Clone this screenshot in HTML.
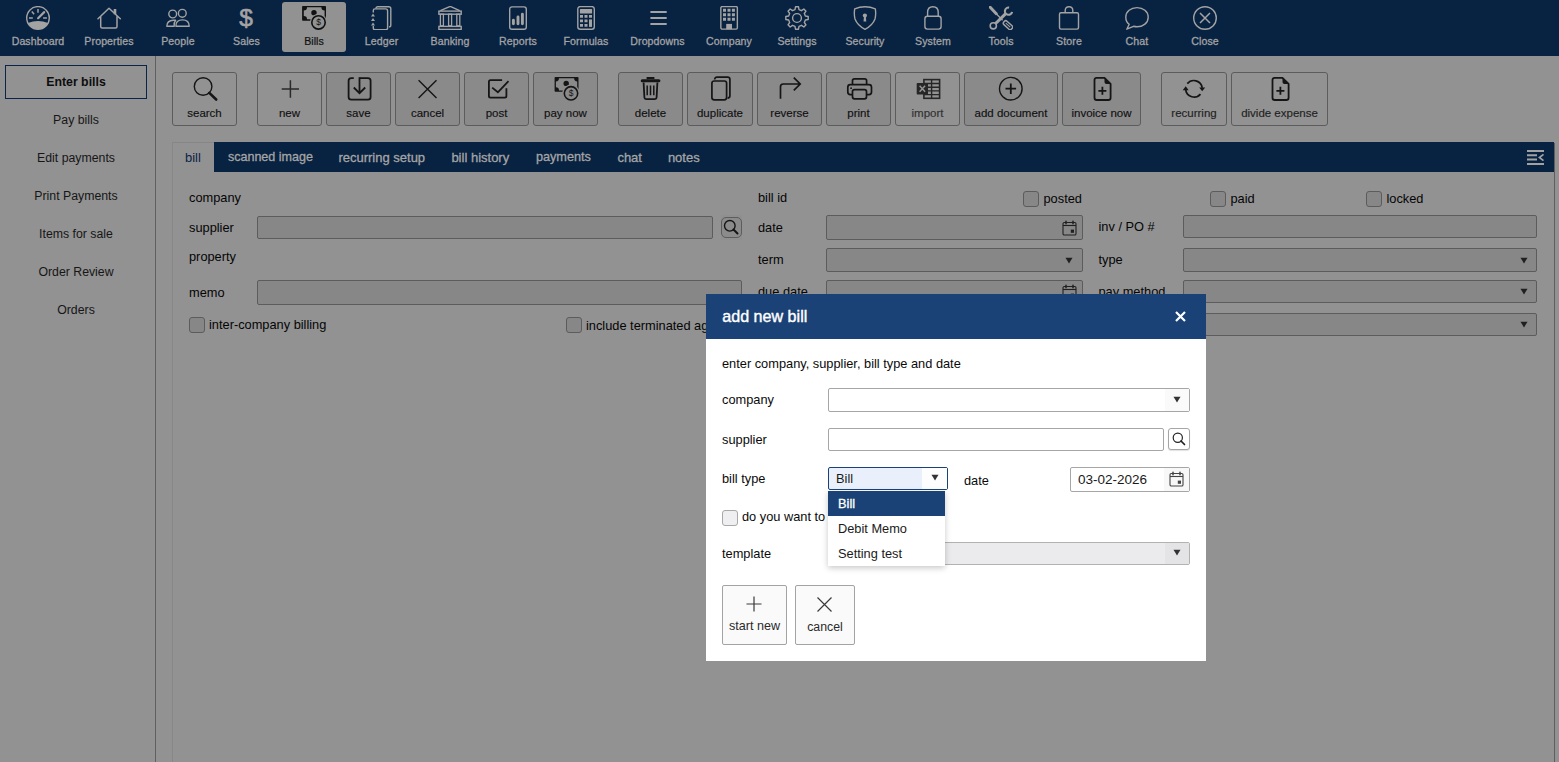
<!DOCTYPE html>
<html><head><meta charset="utf-8"><title>add new bill</title>
<style>
html,body{margin:0;padding:0;}
body{width:1559px;height:762px;overflow:hidden;position:relative;background:#929292;font-family:"Liberation Sans", sans-serif;}
</style></head><body>
<div style="position:absolute;left:0px;top:0px;width:1559px;height:56px;box-sizing:border-box;background:#082242;border-radius:0px;"></div>
<svg style="position:absolute;left:26px;top:6px;" width="24" height="24" viewBox="0 0 24 24"><circle cx="12" cy="11.9" r="11.3" fill="none" stroke="#a3a3a3" stroke-width="1.4"/><path d="M1.9 17 Q12 12.8 22.1 17 A11.3 11.3 0 0 1 1.9 17Z" fill="#a3a3a3"/><path d="M12.1 12.2 L18.2 6.1" stroke="#a3a3a3" stroke-width="2.2" stroke-linecap="round"/><path d="M12 3.1v3.6M5.8 5.5l2.3 2.7M3 12h3.8M17.1 12h3.8" stroke="#a3a3a3" stroke-width="1.5"/></svg>
<div style="position:absolute;left:-162px;width:400px;top:36.03px;font-size:10.6px;line-height:10.6px;color:#a3a3a3;font-weight:normal;text-align:center;white-space:nowrap;-webkit-text-stroke:0.3px #a3a3a3;letter-spacing:0.1px;">Dashboard</div>
<svg style="position:absolute;left:97px;top:6px;" width="24" height="24" viewBox="0 0 24 24"><path d="M1 12.7 L12 2.3 L23.3 12.7 M3.7 10.5 V20.5 Q3.7 22 5.2 22 H18.5 Q20 22 20 20.5 V10.5" fill="none" stroke="#a3a3a3" stroke-width="1.5" stroke-linejoin="round" stroke-linecap="round"/><rect x="16.7" y="3" width="2.6" height="5.3" fill="#a3a3a3"/></svg>
<div style="position:absolute;left:-91px;width:400px;top:36.03px;font-size:10.6px;line-height:10.6px;color:#a3a3a3;font-weight:normal;text-align:center;white-space:nowrap;-webkit-text-stroke:0.3px #a3a3a3;letter-spacing:0.1px;">Properties</div>
<svg style="position:absolute;left:166px;top:6px;" width="24" height="24" viewBox="0 0 24 24"><circle cx="6.7" cy="8" r="3.9" fill="none" stroke="#a3a3a3" stroke-width="1.4"/><circle cx="16.3" cy="7.3" r="3.9" fill="none" stroke="#a3a3a3" stroke-width="1.4"/><path d="M9.9 20.2 Q9.6 13.9 16.5 13.9 Q23.2 13.9 23.2 20.2 Z" fill="none" stroke="#a3a3a3" stroke-width="1.4" stroke-linejoin="round"/><path d="M8.2 20.2 H0.8 Q1 14.6 7.2 14.3 H9.6 Q7.8 16.4 8.2 20.2Z" fill="none" stroke="#a3a3a3" stroke-width="1.4" stroke-linejoin="round"/></svg>
<div style="position:absolute;left:-22px;width:400px;top:36.03px;font-size:10.6px;line-height:10.6px;color:#a3a3a3;font-weight:normal;text-align:center;white-space:nowrap;-webkit-text-stroke:0.3px #a3a3a3;letter-spacing:0.1px;">People</div>
<div style="position:absolute;left:46.0px;width:400px;top:6.46px;font-size:24.5px;line-height:24.5px;color:#a3a3a3;font-weight:normal;text-align:center;white-space:nowrap;-webkit-text-stroke:0.6px #a3a3a3;">$</div>
<div style="position:absolute;left:46.5px;width:400px;top:36.03px;font-size:10.6px;line-height:10.6px;color:#a3a3a3;font-weight:normal;text-align:center;white-space:nowrap;-webkit-text-stroke:0.3px #a3a3a3;letter-spacing:0.1px;">Sales</div>
<div style="position:absolute;left:282px;top:2px;width:64px;height:50px;box-sizing:border-box;background:#929292;border-radius:3px;"></div>
<svg style="position:absolute;left:302px;top:6px;" width="24" height="24" viewBox="0 0 24 24"><rect x="0.1" y="0" width="23.9" height="14.7" rx="0.8" fill="#111"/><path d="M5.00 1.3 H19.40 A3.2 3.2 0 0 0 22.6 4.50 V10.00 A3.2 3.2 0 0 0 19.40 13.2 H5.00 A3.2 3.2 0 0 0 1.8 10.00 V4.50 A3.2 3.2 0 0 0 5.00 1.3Z" fill="#929292"/><circle cx="12" cy="6.7" r="2.7" fill="#111"/><circle cx="16.5" cy="16.4" r="8.6" fill="#929292"/><circle cx="16.5" cy="16.4" r="6.7" fill="#929292" stroke="#111" stroke-width="1.6"/><text x="16.5" y="19.4" font-size="8.5" text-anchor="middle" fill="#111" font-family="Liberation Sans">$</text></svg>
<div style="position:absolute;left:114px;width:400px;top:36.03px;font-size:10.6px;line-height:10.6px;color:#111;font-weight:normal;text-align:center;white-space:nowrap;-webkit-text-stroke:0.2px #111;">Bills</div>
<svg style="position:absolute;left:369.5px;top:6px;" width="24" height="24" viewBox="0 0 24 24"><path d="M6 2.5 Q6 0.8 7.8 0.8 H18.8 Q20.8 0.8 20.8 2.8 V19 Q20.8 20.9 19 20.9" fill="none" stroke="#a3a3a3" stroke-width="1.4"/><path d="M3.3 6.5 V4.6 Q3.3 2.9 5 2.9 H15.6 Q17.6 2.9 17.6 4.9 V21.9 Q17.6 23.7 15.8 23.7 H5 Q3.3 23.7 3.3 22 V20" fill="none" stroke="#a3a3a3" stroke-width="1.4"/><path d="M1 10.6 L3 7.6 L5 10.6Z M1 15 L3 12 L5 15Z M1 19.5 L3 16.5 L5 19.5Z" fill="#a3a3a3"/></svg>
<div style="position:absolute;left:181.5px;width:400px;top:36.03px;font-size:10.6px;line-height:10.6px;color:#a3a3a3;font-weight:normal;text-align:center;white-space:nowrap;-webkit-text-stroke:0.3px #a3a3a3;letter-spacing:0.1px;">Ledger</div>
<svg style="position:absolute;left:438px;top:6px;" width="24" height="24" viewBox="0 0 24 24"><path d="M2.4 4.7 L12.2 0.4 L21.7 4.7" fill="none" stroke="#a3a3a3" stroke-width="1.4" stroke-linejoin="round"/><rect x="0.9" y="5.1" width="22.3" height="3.1" fill="none" stroke="#a3a3a3" stroke-width="1.4"/><rect x="2.4" y="8.2" width="3" height="11.6" fill="none" stroke="#a3a3a3" stroke-width="1.3"/><rect x="10.6" y="8.2" width="3" height="11.6" fill="none" stroke="#a3a3a3" stroke-width="1.3"/><rect x="18.8" y="8.2" width="3" height="11.6" fill="none" stroke="#a3a3a3" stroke-width="1.3"/><rect x="0.9" y="20.4" width="22.3" height="3" fill="none" stroke="#a3a3a3" stroke-width="1.4"/></svg>
<div style="position:absolute;left:250px;width:400px;top:36.03px;font-size:10.6px;line-height:10.6px;color:#a3a3a3;font-weight:normal;text-align:center;white-space:nowrap;-webkit-text-stroke:0.3px #a3a3a3;letter-spacing:0.1px;">Banking</div>
<svg style="position:absolute;left:506px;top:6px;" width="24" height="24" viewBox="0 0 24 24"><rect x="3.7" y="0.9" width="16.6" height="22.3" rx="2.3" fill="none" stroke="#a3a3a3" stroke-width="1.4"/><path d="M7.4 17.8v-3.6M12 17.8v-6.8M16.4 17.8V8.3" stroke="#a3a3a3" stroke-width="2.9" stroke-linecap="round"/></svg>
<div style="position:absolute;left:318px;width:400px;top:36.03px;font-size:10.6px;line-height:10.6px;color:#a3a3a3;font-weight:normal;text-align:center;white-space:nowrap;-webkit-text-stroke:0.3px #a3a3a3;letter-spacing:0.1px;">Reports</div>
<svg style="position:absolute;left:574px;top:6px;" width="24" height="24" viewBox="0 0 24 24"><rect x="3.8" y="0.6" width="16.5" height="22.6" rx="2.5" fill="none" stroke="#a3a3a3" stroke-width="1.4"/><rect x="5.9" y="3.1" width="12.2" height="4.4" rx="0.6" fill="#a3a3a3"/><path d="M6 10.4h3M10.5 10.4h3M15 10.4h3M6 14.9h3M10.5 14.9h3M6 19.4h3M10.5 19.4h3" stroke="#a3a3a3" stroke-width="2.8"/><rect x="15" y="13.4" width="3" height="7.5" fill="#a3a3a3"/></svg>
<div style="position:absolute;left:386px;width:400px;top:36.03px;font-size:10.6px;line-height:10.6px;color:#a3a3a3;font-weight:normal;text-align:center;white-space:nowrap;-webkit-text-stroke:0.3px #a3a3a3;letter-spacing:0.1px;">Formulas</div>
<svg style="position:absolute;left:645.5px;top:6px;" width="24" height="24" viewBox="0 0 24 24"><path d="M4.4 5.9h16.3M4.4 11.9h16.3M4.4 17.9h16.3" stroke="#a3a3a3" stroke-width="2"/></svg>
<div style="position:absolute;left:457.5px;width:400px;top:36.03px;font-size:10.6px;line-height:10.6px;color:#a3a3a3;font-weight:normal;text-align:center;white-space:nowrap;-webkit-text-stroke:0.3px #a3a3a3;letter-spacing:0.1px;">Dropdowns</div>
<svg style="position:absolute;left:717px;top:6px;" width="24" height="24" viewBox="0 0 24 24"><rect x="3.85" y="0.55" width="16.5" height="22.6" rx="1.3" fill="none" stroke="#a3a3a3" stroke-width="1.4"/><path d="M6 4.3h3M10.5 4.3h3M14.9 4.3h3M6 8.8h3M10.5 8.8h3M14.9 8.8h3M6 13.3h3M10.5 13.3h3M14.9 13.3h3" stroke="#a3a3a3" stroke-width="2.9"/><rect x="9.2" y="17.9" width="5.8" height="5.3" fill="#a3a3a3"/></svg>
<div style="position:absolute;left:529px;width:400px;top:36.03px;font-size:10.6px;line-height:10.6px;color:#a3a3a3;font-weight:normal;text-align:center;white-space:nowrap;-webkit-text-stroke:0.3px #a3a3a3;letter-spacing:0.1px;">Company</div>
<svg style="position:absolute;left:785px;top:6px;" width="24" height="24" viewBox="0 0 24 24"><path d="M20.36 9.99 L23.20 10.50 L23.20 13.50 L20.36 14.01 L19.33 16.49 L20.98 18.86 L18.86 20.98 L16.49 19.33 L14.01 20.36 L13.50 23.20 L10.50 23.20 L9.99 20.36 L7.51 19.33 L5.14 20.98 L3.02 18.86 L4.67 16.49 L3.64 14.01 L0.80 13.50 L0.80 10.50 L3.64 9.99 L4.67 7.51 L3.02 5.14 L5.14 3.02 L7.51 4.67 L9.99 3.64 L10.50 0.80 L13.50 0.80 L14.01 3.64 L16.49 4.67 L18.86 3.02 L20.98 5.14 L19.33 7.51 Z" fill="none" stroke="#a3a3a3" stroke-width="1.4" stroke-linejoin="round"/><circle cx="12" cy="12" r="4.4" fill="none" stroke="#a3a3a3" stroke-width="1.4"/></svg>
<div style="position:absolute;left:597px;width:400px;top:36.03px;font-size:10.6px;line-height:10.6px;color:#a3a3a3;font-weight:normal;text-align:center;white-space:nowrap;-webkit-text-stroke:0.3px #a3a3a3;letter-spacing:0.1px;">Settings</div>
<svg style="position:absolute;left:853px;top:6px;" width="24" height="24" viewBox="0 0 24 24"><path d="M12 0.8 Q17.5 0.8 22.3 2.8 Q23.2 8 22 13 Q19.5 19.5 12 23.3 Q4.5 19.5 2 13 Q0.8 8 1.7 2.8 Q6.5 0.8 12 0.8Z" fill="none" stroke="#a3a3a3" stroke-width="1.4" stroke-linejoin="round"/><circle cx="11.9" cy="9.6" r="2.1" fill="#a3a3a3"/><path d="M11 10.5 L10.5 15.6 H13.3 L12.8 10.5Z" fill="#a3a3a3"/></svg>
<div style="position:absolute;left:665px;width:400px;top:36.03px;font-size:10.6px;line-height:10.6px;color:#a3a3a3;font-weight:normal;text-align:center;white-space:nowrap;-webkit-text-stroke:0.3px #a3a3a3;letter-spacing:0.1px;">Security</div>
<svg style="position:absolute;left:921px;top:6px;" width="24" height="24" viewBox="0 0 24 24"><path d="M6.6 10.3 V6.5 Q6.6 0.8 11.9 0.8 Q17.2 0.8 17.2 6.5 V10.3" fill="none" stroke="#a3a3a3" stroke-width="1.4"/><rect x="3.9" y="10.3" width="16.2" height="12.8" rx="2.5" fill="none" stroke="#a3a3a3" stroke-width="1.4"/></svg>
<div style="position:absolute;left:733px;width:400px;top:36.03px;font-size:10.6px;line-height:10.6px;color:#a3a3a3;font-weight:normal;text-align:center;white-space:nowrap;-webkit-text-stroke:0.3px #a3a3a3;letter-spacing:0.1px;">System</div>
<svg style="position:absolute;left:989px;top:6px;" width="24" height="24" viewBox="0 0 24 24"><path d="M1.2 1.2 L7.3 7.8" stroke="#a3a3a3" stroke-width="2.9" stroke-linecap="round"/><path d="M7.3 7.8 L13.6 14.3" stroke="#a3a3a3" stroke-width="1.3"/><g transform="rotate(42 19 19.2)"><rect x="13.8" y="16.9" width="10.4" height="4.6" rx="1.8" fill="none" stroke="#a3a3a3" stroke-width="1.5"/><path d="M16 19.2 H22" stroke="#a3a3a3" stroke-width="1"/></g><circle cx="4.3" cy="19.8" r="3.1" fill="none" stroke="#a3a3a3" stroke-width="1.6"/><path d="M6.6 17.5 L17 7.4" stroke="#a3a3a3" stroke-width="3.1"/><path d="M23.05 5.83 A3.6 3.6 0 1 1 20.13 1.65" fill="none" stroke="#a3a3a3" stroke-width="2.1"/></svg>
<div style="position:absolute;left:801px;width:400px;top:36.03px;font-size:10.6px;line-height:10.6px;color:#a3a3a3;font-weight:normal;text-align:center;white-space:nowrap;-webkit-text-stroke:0.3px #a3a3a3;letter-spacing:0.1px;">Tools</div>
<svg style="position:absolute;left:1057px;top:6px;" width="24" height="24" viewBox="0 0 24 24"><rect x="2.5" y="6.8" width="19" height="16.3" rx="1.5" fill="none" stroke="#a3a3a3" stroke-width="1.4"/><path d="M8.2 6.8 V4.6 Q8.2 0.8 12 0.8 Q15.8 0.8 15.8 4.6 V6.8" fill="none" stroke="#a3a3a3" stroke-width="1.4"/></svg>
<div style="position:absolute;left:869px;width:400px;top:36.03px;font-size:10.6px;line-height:10.6px;color:#a3a3a3;font-weight:normal;text-align:center;white-space:nowrap;-webkit-text-stroke:0.3px #a3a3a3;letter-spacing:0.1px;">Store</div>
<svg style="position:absolute;left:1125px;top:6px;" width="24" height="24" viewBox="0 0 24 24"><path d="M4.2 18.3 C1.8 16.5 0.8 14 0.8 11.2 C0.8 5.5 5.8 1.6 12 1.6 C18.2 1.6 23.2 5.5 23.2 11.2 C23.2 16.9 18.2 20.8 12 20.8 C10.8 20.8 9.6 20.6 8.5 20.3 L1.8 23.2 Z" fill="none" stroke="#a3a3a3" stroke-width="1.4" stroke-linejoin="round"/></svg>
<div style="position:absolute;left:937px;width:400px;top:36.03px;font-size:10.6px;line-height:10.6px;color:#a3a3a3;font-weight:normal;text-align:center;white-space:nowrap;-webkit-text-stroke:0.3px #a3a3a3;letter-spacing:0.1px;">Chat</div>
<svg style="position:absolute;left:1193px;top:6px;" width="24" height="24" viewBox="0 0 24 24"><circle cx="12" cy="12" r="11.3" fill="none" stroke="#a3a3a3" stroke-width="1.4"/><path d="M7 7 L17 17 M17 7 L7 17" stroke="#a3a3a3" stroke-width="1.5"/></svg>
<div style="position:absolute;left:1005px;width:400px;top:36.03px;font-size:10.6px;line-height:10.6px;color:#a3a3a3;font-weight:normal;text-align:center;white-space:nowrap;-webkit-text-stroke:0.3px #a3a3a3;letter-spacing:0.1px;">Close</div>
<div style="position:absolute;left:155px;top:56px;width:1px;height:706px;box-sizing:border-box;background:#5f5f5f;border-radius:0px;"></div>
<div style="position:absolute;left:5px;top:65px;width:142px;height:34px;box-sizing:border-box;background:transparent;border:1px solid #0a2348;border-radius:0px;"></div>
<div style="position:absolute;left:-124px;width:400px;top:75.59px;font-size:12.3px;line-height:12.3px;color:#0d0d0d;font-weight:bold;text-align:center;white-space:nowrap;">Enter bills</div>
<div style="position:absolute;left:-124px;width:400px;top:113.59px;font-size:12.3px;line-height:12.3px;color:#161616;font-weight:normal;text-align:center;white-space:nowrap;">Pay bills</div>
<div style="position:absolute;left:-124px;width:400px;top:151.59px;font-size:12.3px;line-height:12.3px;color:#161616;font-weight:normal;text-align:center;white-space:nowrap;">Edit payments</div>
<div style="position:absolute;left:-124px;width:400px;top:189.59px;font-size:12.3px;line-height:12.3px;color:#161616;font-weight:normal;text-align:center;white-space:nowrap;">Print Payments</div>
<div style="position:absolute;left:-124px;width:400px;top:227.59px;font-size:12.3px;line-height:12.3px;color:#161616;font-weight:normal;text-align:center;white-space:nowrap;">Items for sale</div>
<div style="position:absolute;left:-124px;width:400px;top:265.59px;font-size:12.3px;line-height:12.3px;color:#161616;font-weight:normal;text-align:center;white-space:nowrap;">Order Review</div>
<div style="position:absolute;left:-124px;width:400px;top:303.59px;font-size:12.3px;line-height:12.3px;color:#161616;font-weight:normal;text-align:center;white-space:nowrap;">Orders</div>
<div style="position:absolute;left:172px;top:72px;width:65px;height:54px;box-sizing:border-box;background:#929292;border:1px solid #5c5c5c;border-radius:3px;"></div>
<svg style="position:absolute;left:190.5px;top:75px;" width="28" height="28" viewBox="0 0 28 28"><circle cx="12.1" cy="11.5" r="8.8" fill="none" stroke="#151515" stroke-width="1.4"/><path d="M18.3 17.9 L25.2 24.5" stroke="#151515" stroke-width="2.6" stroke-linecap="round"/></svg>
<div style="position:absolute;left:4.5px;width:400px;top:108.27px;font-size:11.5px;line-height:11.5px;color:#111111;font-weight:normal;text-align:center;white-space:nowrap;-webkit-text-stroke:0.15px #111111;">search</div>
<div style="position:absolute;left:257px;top:72px;width:65px;height:54px;box-sizing:border-box;background:#929292;border:1px solid #5c5c5c;border-radius:3px;"></div>
<svg style="position:absolute;left:275.5px;top:75px;" width="28" height="28" viewBox="0 0 28 28"><path d="M14.4 5.2v17.6M5.7 14h17.3" stroke="#2a2a2a" stroke-width="1.5"/></svg>
<div style="position:absolute;left:89.5px;width:400px;top:108.27px;font-size:11.5px;line-height:11.5px;color:#111111;font-weight:normal;text-align:center;white-space:nowrap;-webkit-text-stroke:0.15px #111111;">new</div>
<div style="position:absolute;left:326px;top:72px;width:65px;height:54px;box-sizing:border-box;background:#8a8a8b;border:1px solid #5c5c5c;border-radius:3px;"></div>
<svg style="position:absolute;left:344.5px;top:75px;" width="28" height="28" viewBox="0 0 28 28"><path d="M14.5 3.1 H23 Q25.6 3.1 25.6 5.7 V22 Q25.6 24.7 23 24.7 H6.3 Q3.6 24.7 3.6 22 V5.7 Q3.6 3.1 6.3 3.1 H8.8" fill="none" stroke="#151515" stroke-width="1.8"/><path d="M14.5 2.2 V18.2 M8.8 12.5 L14.5 18.2 L20.2 12.5" fill="none" stroke="#151515" stroke-width="1.8"/></svg>
<div style="position:absolute;left:158.5px;width:400px;top:108.27px;font-size:11.5px;line-height:11.5px;color:#111111;font-weight:normal;text-align:center;white-space:nowrap;-webkit-text-stroke:0.15px #111111;">save</div>
<div style="position:absolute;left:395px;top:72px;width:65px;height:54px;box-sizing:border-box;background:#8a8a8b;border:1px solid #5c5c5c;border-radius:3px;"></div>
<svg style="position:absolute;left:413.5px;top:75px;" width="28" height="28" viewBox="0 0 28 28"><path d="M4.6 5.2 L22.5 23.1 M22.5 5.2 L4.6 23.1" stroke="#151515" stroke-width="1.4"/></svg>
<div style="position:absolute;left:227.5px;width:400px;top:108.27px;font-size:11.5px;line-height:11.5px;color:#111111;font-weight:normal;text-align:center;white-space:nowrap;-webkit-text-stroke:0.15px #111111;">cancel</div>
<div style="position:absolute;left:464px;top:72px;width:65px;height:54px;box-sizing:border-box;background:#8a8a8b;border:1px solid #5c5c5c;border-radius:3px;"></div>
<svg style="position:absolute;left:482.5px;top:75px;" width="28" height="28" viewBox="0 0 28 28"><path d="M19.1 5.2 H7.5 Q5.9 5.2 5.9 6.8 V21 Q5.9 22.6 7.5 22.6 H21.8 Q23.4 22.6 23.4 21 V13.2" fill="none" stroke="#151515" stroke-width="1.8"/><path d="M9.2 12.6 L14.9 17.3 L25.5 6.2" fill="none" stroke="#151515" stroke-width="1.8"/></svg>
<div style="position:absolute;left:296.5px;width:400px;top:108.27px;font-size:11.5px;line-height:11.5px;color:#111111;font-weight:normal;text-align:center;white-space:nowrap;-webkit-text-stroke:0.15px #111111;">post</div>
<div style="position:absolute;left:533px;top:72px;width:65px;height:54px;box-sizing:border-box;background:#8a8a8b;border:1px solid #5c5c5c;border-radius:3px;"></div>
<svg style="position:absolute;left:551.5px;top:75px;" width="28" height="28" viewBox="0 0 28 28"><rect x="2.6" y="2" width="23.9" height="14.7" rx="0.8" fill="#151515"/><path d="M7.00 3.3 H22.10 A3.1 3.1 0 0 0 25.2 6.40 V12.30 A3.1 3.1 0 0 0 22.10 15.4 H7.00 A3.1 3.1 0 0 0 3.9 12.30 V6.40 A3.1 3.1 0 0 0 7.00 3.3Z" fill="#8a8a8b"/><circle cx="14.2" cy="8.4" r="2.7" fill="#151515"/><circle cx="19" cy="18.3" r="8.8" fill="#8a8a8b"/><circle cx="19" cy="18.3" r="6.7" fill="#8a8a8b" stroke="#151515" stroke-width="1.6"/><text x="19" y="21.3" font-size="8.5" text-anchor="middle" fill="#151515" font-family="Liberation Sans">$</text></svg>
<div style="position:absolute;left:365.5px;width:400px;top:108.27px;font-size:11.5px;line-height:11.5px;color:#111111;font-weight:normal;text-align:center;white-space:nowrap;-webkit-text-stroke:0.15px #111111;">pay now</div>
<div style="position:absolute;left:618px;top:72px;width:65px;height:54px;box-sizing:border-box;background:#8a8a8b;border:1px solid #5c5c5c;border-radius:3px;"></div>
<svg style="position:absolute;left:636.5px;top:75px;" width="28" height="28" viewBox="0 0 28 28"><path d="M5.2 5.8 H21.9" stroke="#151515" stroke-width="3" stroke-linecap="round"/><path d="M10.5 4.2 V3 H16.5 V4.2" fill="none" stroke="#151515" stroke-width="1.8"/><path d="M6.6 7.5 L7.4 22.5 Q7.5 24.1 9.1 24.1 H17.9 Q19.5 24.1 19.6 22.5 L20.4 7.5" fill="none" stroke="#151515" stroke-width="1.8"/><path d="M10.2 10.4v9.9M13.5 10.4v9.9M16.8 10.4v9.9" stroke="#151515" stroke-width="1.5"/></svg>
<div style="position:absolute;left:450.5px;width:400px;top:108.27px;font-size:11.5px;line-height:11.5px;color:#111111;font-weight:normal;text-align:center;white-space:nowrap;-webkit-text-stroke:0.15px #111111;">delete</div>
<div style="position:absolute;left:687px;top:72px;width:66px;height:54px;box-sizing:border-box;background:#8a8a8b;border:1px solid #5c5c5c;border-radius:3px;"></div>
<svg style="position:absolute;left:706.0px;top:75px;" width="28" height="28" viewBox="0 0 28 28"><path d="M8.7 4.5 Q8.7 2.2 11 2.2 H21.6 Q23.9 2.2 23.9 4.5 V20.8 Q23.9 23.1 21.6 23.1" fill="none" stroke="#151515" stroke-width="1.7"/><rect x="5.9" y="6" width="14.7" height="18.8" rx="2.3" fill="#8a8a8b" stroke="#151515" stroke-width="1.7"/></svg>
<div style="position:absolute;left:520.0px;width:400px;top:108.27px;font-size:11.5px;line-height:11.5px;color:#111111;font-weight:normal;text-align:center;white-space:nowrap;-webkit-text-stroke:0.15px #111111;">duplicate</div>
<div style="position:absolute;left:757px;top:72px;width:65px;height:54px;box-sizing:border-box;background:#8a8a8b;border:1px solid #5c5c5c;border-radius:3px;"></div>
<svg style="position:absolute;left:775.5px;top:75px;" width="28" height="28" viewBox="0 0 28 28"><path d="M4.5 23.8 V11.7 Q4.5 9 7.2 9 H23.8 M17.8 2.6 L24.2 9 L17.8 15.4" fill="none" stroke="#151515" stroke-width="1.7"/></svg>
<div style="position:absolute;left:589.5px;width:400px;top:108.27px;font-size:11.5px;line-height:11.5px;color:#111111;font-weight:normal;text-align:center;white-space:nowrap;-webkit-text-stroke:0.15px #111111;">reverse</div>
<div style="position:absolute;left:826px;top:72px;width:65px;height:54px;box-sizing:border-box;background:#8a8a8b;border:1px solid #5c5c5c;border-radius:3px;"></div>
<svg style="position:absolute;left:844.5px;top:75px;" width="28" height="28" viewBox="0 0 28 28"><path d="M7.5 10 V5.8 Q7.5 3.8 9.5 3.8 H19.6 Q21.6 3.8 21.6 5.8 V10" fill="none" stroke="#151515" stroke-width="1.7"/><path d="M7.5 19.6 H5.3 Q2.8 19.6 2.8 17.1 V12.2 Q2.8 9.7 5.3 9.7 H24 Q26.5 9.7 26.5 12.2 V17.1 Q26.5 19.6 24 19.6 H21.5" fill="none" stroke="#151515" stroke-width="1.7"/><rect x="7.5" y="14.6" width="14" height="9.2" rx="2" fill="#8a8a8b" stroke="#151515" stroke-width="1.7"/><circle cx="6.1" cy="13.2" r="0.9" fill="#151515"/></svg>
<div style="position:absolute;left:658.5px;width:400px;top:108.27px;font-size:11.5px;line-height:11.5px;color:#111111;font-weight:normal;text-align:center;white-space:nowrap;-webkit-text-stroke:0.15px #111111;">print</div>
<div style="position:absolute;left:895px;top:72px;width:65px;height:54px;box-sizing:border-box;background:#929292;border:1px solid #5c5c5c;border-radius:3px;"></div>
<svg style="position:absolute;left:913.5px;top:75px;" width="28" height="28" viewBox="0 0 28 28"><rect x="9.9" y="4.6" width="15.7" height="18.7" fill="none" stroke="#262626" stroke-width="1.6"/><path d="M9.9 8.5h15.7M9.9 12.2h15.7M9.9 15.9h15.7M9.9 19.6h15.7M17.6 4.6v18.7" stroke="#262626" stroke-width="1.4"/><rect x="2.7" y="8" width="11.3" height="11.6" rx="0.8" fill="#262626"/><path d="M5.6 10.8 L11.1 16.8 M11.1 10.8 L5.6 16.8" stroke="#939393" stroke-width="1.5"/></svg>
<div style="position:absolute;left:727.5px;width:400px;top:108.27px;font-size:11.5px;line-height:11.5px;color:#303030;font-weight:normal;text-align:center;white-space:nowrap;-webkit-text-stroke:0.15px #303030;">import</div>
<div style="position:absolute;left:964px;top:72px;width:94px;height:54px;box-sizing:border-box;background:#8a8a8b;border:1px solid #5c5c5c;border-radius:3px;"></div>
<svg style="position:absolute;left:997.0px;top:75px;" width="28" height="28" viewBox="0 0 28 28"><circle cx="13.8" cy="13.7" r="11.3" fill="none" stroke="#151515" stroke-width="1.4"/><path d="M13.8 8.4v10.6M8.5 13.7h10.6" stroke="#151515" stroke-width="1.8"/></svg>
<div style="position:absolute;left:811.0px;width:400px;top:108.27px;font-size:11.5px;line-height:11.5px;color:#111111;font-weight:normal;text-align:center;white-space:nowrap;-webkit-text-stroke:0.15px #111111;">add document</div>
<div style="position:absolute;left:1062px;top:72px;width:79px;height:54px;box-sizing:border-box;background:#8a8a8b;border:1px solid #5c5c5c;border-radius:3px;"></div>
<svg style="position:absolute;left:1087.5px;top:75px;" width="28" height="28" viewBox="0 0 28 28"><path d="M8.2 2.8 H16.5 L22.6 8.9 V22.7 Q22.6 25 20.3 25 H8.8 Q6.5 25 6.5 22.7 V5.1 Q6.5 2.8 8.8 2.8Z" fill="none" stroke="#151515" stroke-width="1.8" stroke-linejoin="round"/><path d="M16.5 2.8 L22.6 8.9 H18.5 Q16.5 8.9 16.5 6.9Z" fill="#151515"/><path d="M14.4 11.8v8M10.4 15.8h8" stroke="#151515" stroke-width="1.8"/></svg>
<div style="position:absolute;left:901.5px;width:400px;top:108.27px;font-size:11.5px;line-height:11.5px;color:#111111;font-weight:normal;text-align:center;white-space:nowrap;-webkit-text-stroke:0.15px #111111;">invoice now</div>
<div style="position:absolute;left:1161px;top:72px;width:66px;height:54px;box-sizing:border-box;background:#929292;border:1px solid #5c5c5c;border-radius:3px;"></div>
<svg style="position:absolute;left:1180.0px;top:75px;" width="28" height="28" viewBox="0 0 28 28"><path d="M7.3 8.6 A8.5 8.5 0 0 1 22.2 12.8" fill="none" stroke="#151515" stroke-width="1.7"/><path d="M20.5 19.1 A8.5 8.5 0 0 1 5.7 15" fill="none" stroke="#151515" stroke-width="1.7"/><path d="M19.2 12.6 L25.2 12.6 L22.2 16.2Z M2.7 15.2 L8.7 15.2 L5.7 11.3Z" fill="#151515"/></svg>
<div style="position:absolute;left:994.0px;width:400px;top:108.27px;font-size:11.5px;line-height:11.5px;color:#222222;font-weight:normal;text-align:center;white-space:nowrap;-webkit-text-stroke:0.15px #222222;">recurring</div>
<div style="position:absolute;left:1231px;top:72px;width:97px;height:54px;box-sizing:border-box;background:#929292;border:1px solid #5c5c5c;border-radius:3px;"></div>
<svg style="position:absolute;left:1265.5px;top:75px;" width="28" height="28" viewBox="0 0 28 28"><path d="M8.2 2.8 H16.5 L22.6 8.9 V22.7 Q22.6 25 20.3 25 H8.8 Q6.5 25 6.5 22.7 V5.1 Q6.5 2.8 8.8 2.8Z" fill="none" stroke="#151515" stroke-width="1.8" stroke-linejoin="round"/><path d="M16.5 2.8 L22.6 8.9 H18.5 Q16.5 8.9 16.5 6.9Z" fill="#151515"/><path d="M14.4 11.8v8M10.4 15.8h8" stroke="#151515" stroke-width="1.8"/></svg>
<div style="position:absolute;left:1079.5px;width:400px;top:108.27px;font-size:11.5px;line-height:11.5px;color:#222222;font-weight:normal;text-align:center;white-space:nowrap;-webkit-text-stroke:0.15px #222222;">divide expense</div>
<div style="position:absolute;left:172px;top:142px;width:1382px;height:30px;box-sizing:border-box;background:#082242;border-radius:0px;"></div>
<div style="position:absolute;left:172px;top:142px;width:42px;height:30px;box-sizing:border-box;background:#929292;border-radius:0px;"></div>
<div style="position:absolute;left:172px;top:142px;width:42px;height:1px;box-sizing:border-box;background:#868686;border-radius:0px;"></div>
<div style="position:absolute;left:172px;top:142px;width:1px;height:620px;box-sizing:border-box;background:#878787;border-radius:0px;"></div>
<div style="position:absolute;left:1554px;top:143px;width:1px;height:619px;box-sizing:border-box;background:#5e5e5e;border-radius:0px;"></div>
<div style="position:absolute;left:185px;top:150.50px;font-size:13px;line-height:13px;color:#0b2346;font-weight:normal;white-space:nowrap;">bill</div>
<div style="position:absolute;left:227.9px;top:150.88px;font-size:12.55px;line-height:12.55px;color:#a5a5a5;font-weight:normal;white-space:nowrap;-webkit-text-stroke:0.3px #a5a5a5;">scanned image</div>
<div style="position:absolute;left:338.4px;top:150.50px;font-size:13px;line-height:13px;color:#a5a5a5;font-weight:normal;white-space:nowrap;-webkit-text-stroke:0.3px #a5a5a5;">recurring setup</div>
<div style="position:absolute;left:451.4px;top:150.50px;font-size:13px;line-height:13px;color:#a5a5a5;font-weight:normal;white-space:nowrap;-webkit-text-stroke:0.3px #a5a5a5;">bill history</div>
<div style="position:absolute;left:535.9px;top:150.75px;font-size:12.7px;line-height:12.7px;color:#a5a5a5;font-weight:normal;white-space:nowrap;-webkit-text-stroke:0.3px #a5a5a5;">payments</div>
<div style="position:absolute;left:617.4px;top:150.50px;font-size:13px;line-height:13px;color:#a5a5a5;font-weight:normal;white-space:nowrap;-webkit-text-stroke:0.3px #a5a5a5;">chat</div>
<div style="position:absolute;left:667.9px;top:150.50px;font-size:13px;line-height:13px;color:#a5a5a5;font-weight:normal;white-space:nowrap;-webkit-text-stroke:0.3px #a5a5a5;">notes</div>
<svg style="position:absolute;left:1526px;top:149px;" width="20" height="17" viewBox="0 0 20 17"><path d="M1 2H18M1 6.2H11M1 10.6H11M1 14.9H18" stroke="#a2a2a2" stroke-width="2"/><path d="M17.5 5.3 L13.4 8.5 L17.5 11.7" fill="none" stroke="#a2a2a2" stroke-width="1.7"/></svg>
<div style="position:absolute;left:189px;top:192.16px;font-size:12.8px;line-height:12.8px;color:#050505;font-weight:normal;white-space:nowrap;">company</div>
<div style="position:absolute;left:189px;top:221.66px;font-size:12.8px;line-height:12.8px;color:#050505;font-weight:normal;white-space:nowrap;">supplier</div>
<div style="position:absolute;left:189px;top:251.16px;font-size:12.8px;line-height:12.8px;color:#050505;font-weight:normal;white-space:nowrap;">property</div>
<div style="position:absolute;left:189px;top:286.66px;font-size:12.8px;line-height:12.8px;color:#050505;font-weight:normal;white-space:nowrap;">memo</div>
<div style="position:absolute;left:257px;top:216px;width:456px;height:23px;box-sizing:border-box;background:#878788;border:1px solid #5c5c5c;border-radius:2px;"></div>
<div style="position:absolute;left:721px;top:215px;width:21px;height:25px;box-sizing:border-box;background:#8f8f8f;border-radius:0px;"></div>
<div style="position:absolute;left:721px;top:217px;width:21px;height:21px;box-sizing:border-box;background:#8b8b8c;border:1px solid #5c5c5c;border-radius:5px;"></div>
<svg style="position:absolute;left:723px;top:219px;" width="16" height="16" viewBox="0 0 16 16"><circle cx="6.8" cy="6.8" r="5.3" fill="none" stroke="#151515" stroke-width="1.4"/><path d="M10.5 10.5 L14.5 14.5" stroke="#151515" stroke-width="2" stroke-linecap="round"/></svg>
<div style="position:absolute;left:257px;top:280px;width:485px;height:25px;box-sizing:border-box;background:#878788;border:1px solid #5c5c5c;border-radius:2px;"></div>
<div style="position:absolute;left:189px;top:317px;width:16px;height:16px;box-sizing:border-box;background:#878788;border:1px solid #5c5c5c;border-radius:3px;"></div>
<div style="position:absolute;left:209px;top:319.16px;font-size:12.8px;line-height:12.8px;color:#050505;font-weight:normal;white-space:nowrap;">inter-company billing</div>
<div style="position:absolute;left:566px;top:317px;width:16px;height:16px;box-sizing:border-box;background:#878788;border:1px solid #5c5c5c;border-radius:3px;"></div>
<div style="position:absolute;left:586px;top:319.66px;font-size:12.8px;line-height:12.8px;color:#050505;font-weight:normal;white-space:nowrap;">include terminated agreements</div>
<div style="position:absolute;left:758px;top:192.16px;font-size:12.8px;line-height:12.8px;color:#050505;font-weight:normal;white-space:nowrap;">bill id</div>
<div style="position:absolute;left:758px;top:222.46px;font-size:12.8px;line-height:12.8px;color:#050505;font-weight:normal;white-space:nowrap;">date</div>
<div style="position:absolute;left:758px;top:254.16px;font-size:12.8px;line-height:12.8px;color:#050505;font-weight:normal;white-space:nowrap;">term</div>
<div style="position:absolute;left:758px;top:286.16px;font-size:12.8px;line-height:12.8px;color:#050505;font-weight:normal;white-space:nowrap;">due date</div>
<div style="position:absolute;left:826px;top:215px;width:257px;height:25px;box-sizing:border-box;background:#878788;border:1px solid #5c5c5c;border-radius:2px;"></div>
<svg style="position:absolute;left:1061.5px;top:219.5px;" width="15" height="16" viewBox="0 0 15 16"><rect x="1" y="2.5" width="13" height="12.5" rx="1.3" fill="none" stroke="#202020" stroke-width="1.1"/><path d="M1 5.5H14" stroke="#202020" stroke-width="1.1"/><path d="M4 1.2v2.6M11 1.2v2.6" stroke="#202020" stroke-width="1.5" stroke-linecap="round"/><rect x="8.8" y="9.6" width="3.2" height="3.2" fill="#202020"/></svg>
<div style="position:absolute;left:826px;top:248px;width:257px;height:24px;box-sizing:border-box;background:#878788;border:1px solid #5c5c5c;border-radius:2px;"></div>
<svg style="position:absolute;left:1065px;top:256.5px;" width="8" height="7" viewBox="0 0 8 7"><path d="M0.5 0.8H7.5L4 6.6Z" fill="#202020"/></svg>
<div style="position:absolute;left:826px;top:280px;width:257px;height:24px;box-sizing:border-box;background:#878788;border:1px solid #5c5c5c;border-radius:2px;"></div>
<svg style="position:absolute;left:1061.5px;top:283.5px;" width="15" height="16" viewBox="0 0 15 16"><rect x="1" y="2.5" width="13" height="12.5" rx="1.3" fill="none" stroke="#202020" stroke-width="1.1"/><path d="M1 5.5H14" stroke="#202020" stroke-width="1.1"/><path d="M4 1.2v2.6M11 1.2v2.6" stroke="#202020" stroke-width="1.5" stroke-linecap="round"/><rect x="8.8" y="9.6" width="3.2" height="3.2" fill="#202020"/></svg>
<div style="position:absolute;left:1023px;top:191px;width:16px;height:16px;box-sizing:border-box;background:#878788;border:1px solid #5c5c5c;border-radius:3px;"></div>
<div style="position:absolute;left:1043.5px;top:193.16px;font-size:12.8px;line-height:12.8px;color:#050505;font-weight:normal;white-space:nowrap;">posted</div>
<div style="position:absolute;left:1210px;top:191px;width:16px;height:16px;box-sizing:border-box;background:#878788;border:1px solid #5c5c5c;border-radius:3px;"></div>
<div style="position:absolute;left:1230.5px;top:193.16px;font-size:12.8px;line-height:12.8px;color:#050505;font-weight:normal;white-space:nowrap;">paid</div>
<div style="position:absolute;left:1366px;top:191px;width:16px;height:16px;box-sizing:border-box;background:#878788;border:1px solid #5c5c5c;border-radius:3px;"></div>
<div style="position:absolute;left:1386.5px;top:193.16px;font-size:12.8px;line-height:12.8px;color:#050505;font-weight:normal;white-space:nowrap;">locked</div>
<div style="position:absolute;left:1098.5px;top:221.16px;font-size:12.8px;line-height:12.8px;color:#050505;font-weight:normal;white-space:nowrap;">inv / PO #</div>
<div style="position:absolute;left:1098.5px;top:254.16px;font-size:12.8px;line-height:12.8px;color:#050505;font-weight:normal;white-space:nowrap;">type</div>
<div style="position:absolute;left:1098.5px;top:286.16px;font-size:12.8px;line-height:12.8px;color:#050505;font-weight:normal;white-space:nowrap;">pay method</div>
<div style="position:absolute;left:1183px;top:215px;width:354px;height:23px;box-sizing:border-box;background:#878788;border:1px solid #5c5c5c;border-radius:2px;"></div>
<div style="position:absolute;left:1183px;top:248px;width:354px;height:24px;box-sizing:border-box;background:#878788;border:1px solid #5c5c5c;border-radius:2px;"></div>
<svg style="position:absolute;left:1519.5px;top:256.5px;" width="8" height="7" viewBox="0 0 8 7"><path d="M0.5 0.8H7.5L4 6.6Z" fill="#202020"/></svg>
<div style="position:absolute;left:1183px;top:280px;width:354px;height:23px;box-sizing:border-box;background:#878788;border:1px solid #5c5c5c;border-radius:2px;"></div>
<svg style="position:absolute;left:1519.5px;top:288.0px;" width="8" height="7" viewBox="0 0 8 7"><path d="M0.5 0.8H7.5L4 6.6Z" fill="#202020"/></svg>
<div style="position:absolute;left:1183px;top:313px;width:354px;height:23px;box-sizing:border-box;background:#878788;border:1px solid #5c5c5c;border-radius:2px;"></div>
<svg style="position:absolute;left:1519.5px;top:321.0px;" width="8" height="7" viewBox="0 0 8 7"><path d="M0.5 0.8H7.5L4 6.6Z" fill="#202020"/></svg>
<div style="position:absolute;left:826px;top:313px;width:257px;height:23px;box-sizing:border-box;background:#878788;border:1px solid #5c5c5c;border-radius:2px;"></div>
<div style="position:absolute;left:706px;top:294px;width:500px;height:367px;box-sizing:border-box;background:#ffffff;border-radius:0px;"></div>
<div style="position:absolute;left:706px;top:294px;width:500px;height:45px;box-sizing:border-box;background:#1a4276;border-radius:0px;"></div>
<div style="position:absolute;left:722.3px;top:308.37px;font-size:16.1px;line-height:16.1px;color:#ffffff;font-weight:normal;white-space:nowrap;-webkit-text-stroke:0.4px #fff;">add new bill</div>
<svg style="position:absolute;left:1175px;top:311px;" width="11" height="11" viewBox="0 0 11 11"><path d="M1 1L10 10M10 1L1 10" stroke="#fff" stroke-width="2.2"/></svg>
<div style="position:absolute;left:722px;top:358.16px;font-size:12.8px;line-height:12.8px;color:#0a0a0a;font-weight:normal;white-space:nowrap;">enter company, supplier, bill type and date</div>
<div style="position:absolute;left:722px;top:394.16px;font-size:12.8px;line-height:12.8px;color:#0a0a0a;font-weight:normal;white-space:nowrap;">company</div>
<div style="position:absolute;left:722px;top:434.16px;font-size:12.8px;line-height:12.8px;color:#0a0a0a;font-weight:normal;white-space:nowrap;">supplier</div>
<div style="position:absolute;left:722px;top:473.16px;font-size:12.8px;line-height:12.8px;color:#0a0a0a;font-weight:normal;white-space:nowrap;">bill type</div>
<div style="position:absolute;left:964px;top:474.66px;font-size:12.8px;line-height:12.8px;color:#0a0a0a;font-weight:normal;white-space:nowrap;">date</div>
<div style="position:absolute;left:742px;top:510.66px;font-size:12.8px;line-height:12.8px;color:#0a0a0a;font-weight:normal;white-space:nowrap;">do you want to</div>
<div style="position:absolute;left:722px;top:548.16px;font-size:12.8px;line-height:12.8px;color:#0a0a0a;font-weight:normal;white-space:nowrap;">template</div>
<div style="position:absolute;left:828px;top:388px;width:362px;height:24px;box-sizing:border-box;background:#fff;border:1px solid #a6a6a6;border-radius:2px;"></div>
<div style="position:absolute;left:1165px;top:389px;width:24px;height:22px;box-sizing:border-box;background:#fafafa;border-radius:0px;"></div>
<svg style="position:absolute;left:1172.5px;top:396.0px;" width="8" height="7" viewBox="0 0 8 7"><path d="M0.5 0.8H7.5L4 6.6Z" fill="#333"/></svg>
<div style="position:absolute;left:828px;top:428px;width:336px;height:23px;box-sizing:border-box;background:#fff;border:1px solid #a6a6a6;border-radius:2px;"></div>
<div style="position:absolute;left:1168px;top:428px;width:22px;height:22px;box-sizing:border-box;background:#fff;border:1px solid #a6a6a6;border-radius:3px;box-shadow:0 1px 1px rgba(0,0,0,0.12);"></div>
<svg style="position:absolute;left:1171px;top:431px;" width="16" height="16" viewBox="0 0 16 16"><circle cx="6.8" cy="6.8" r="4.6" fill="none" stroke="#222" stroke-width="1.2"/><path d="M10 10 L13.5 13.5" stroke="#222" stroke-width="1.7" stroke-linecap="round"/></svg>
<div style="position:absolute;left:828px;top:467px;width:120px;height:23px;box-sizing:border-box;background:#e9f0fb;border:1px solid #1a4276;border-radius:2px;"></div>
<div style="position:absolute;left:922px;top:468px;width:25px;height:21px;box-sizing:border-box;background:#fdfdfd;border-radius:0px;"></div>
<svg style="position:absolute;left:930.5px;top:474.0px;" width="8" height="7" viewBox="0 0 8 7"><path d="M0.5 0.8H7.5L4 6.6Z" fill="#333"/></svg>
<div style="position:absolute;left:836px;top:473.16px;font-size:12.8px;line-height:12.8px;color:#1a1a1a;font-weight:normal;white-space:nowrap;">Bill</div>
<div style="position:absolute;left:1070px;top:467px;width:120px;height:25px;box-sizing:border-box;background:#fff;border:1px solid #a6a6a6;border-radius:2px;"></div>
<div style="position:absolute;left:1164px;top:468px;width:25px;height:23px;box-sizing:border-box;background:#f8f8f8;border-radius:0px;"></div>
<svg style="position:absolute;left:1169px;top:470.5px;" width="15" height="16" viewBox="0 0 15 16"><rect x="1" y="2.5" width="13" height="12.5" rx="1.3" fill="none" stroke="#444" stroke-width="1.1"/><path d="M1 5.5H14" stroke="#444" stroke-width="1.1"/><path d="M4 1.2v2.6M11 1.2v2.6" stroke="#444" stroke-width="1.5" stroke-linecap="round"/><rect x="8.8" y="9.6" width="3.2" height="3.2" fill="#444"/></svg>
<div style="position:absolute;left:1078px;top:473.07px;font-size:13.5px;line-height:13.5px;color:#1a1a1a;font-weight:normal;white-space:nowrap;">03-02-2026</div>
<div style="position:absolute;left:722px;top:510px;width:16px;height:16px;box-sizing:border-box;background:#efeff1;border:1px solid #a8a8a8;border-radius:3px;"></div>
<div style="position:absolute;left:828px;top:542px;width:362px;height:23px;box-sizing:border-box;background:#ebebee;border:1px solid #b2b2b2;border-radius:2px;"></div>
<div style="position:absolute;left:1165px;top:543px;width:24px;height:21px;box-sizing:border-box;background:#e4e4e7;border-radius:0px;"></div>
<svg style="position:absolute;left:1172.5px;top:549.0px;" width="8" height="7" viewBox="0 0 8 7"><path d="M0.5 0.8H7.5L4 6.6Z" fill="#333"/></svg>
<div style="position:absolute;left:828px;top:491px;width:117px;height:75px;box-sizing:border-box;background:#fff;border-radius:0px;box-shadow:0 2px 6px rgba(0,0,0,0.22);"></div>
<div style="position:absolute;left:828px;top:491px;width:117px;height:25px;box-sizing:border-box;background:#1a4276;border-radius:0px;"></div>
<div style="position:absolute;left:838px;top:498.16px;font-size:12.8px;line-height:12.8px;color:#fff;font-weight:normal;white-space:nowrap;-webkit-text-stroke:0.3px #fff;">Bill</div>
<div style="position:absolute;left:838px;top:523.16px;font-size:12.8px;line-height:12.8px;color:#1a1a1a;font-weight:normal;white-space:nowrap;">Debit Memo</div>
<div style="position:absolute;left:838px;top:548.16px;font-size:12.8px;line-height:12.8px;color:#1a1a1a;font-weight:normal;white-space:nowrap;">Setting test</div>
<div style="position:absolute;left:722px;top:585px;width:65px;height:60px;box-sizing:border-box;background:#fafafa;border:1px solid #a3a3a3;border-radius:2px;"></div>
<svg style="position:absolute;left:745px;top:595px;" width="18" height="18" viewBox="0 0 18 18"><path d="M9 1.5v15M1.5 9h15" stroke="#3a3a3a" stroke-width="1.2"/></svg>
<div style="position:absolute;left:554.5px;width:400px;top:620.33px;font-size:12.6px;line-height:12.6px;color:#2a2a2a;font-weight:normal;text-align:center;white-space:nowrap;">start new</div>
<div style="position:absolute;left:795px;top:585px;width:60px;height:60px;box-sizing:border-box;background:#fafafa;border:1px solid #a3a3a3;border-radius:2px;"></div>
<svg style="position:absolute;left:816px;top:596px;" width="17" height="17" viewBox="0 0 17 17"><path d="M1.5 1.5L15.5 15.5M15.5 1.5L1.5 15.5" stroke="#3a3a3a" stroke-width="1.2"/></svg>
<div style="position:absolute;left:625px;width:400px;top:620.59px;font-size:12.3px;line-height:12.3px;color:#2a2a2a;font-weight:normal;text-align:center;white-space:nowrap;">cancel</div>
</body></html>
